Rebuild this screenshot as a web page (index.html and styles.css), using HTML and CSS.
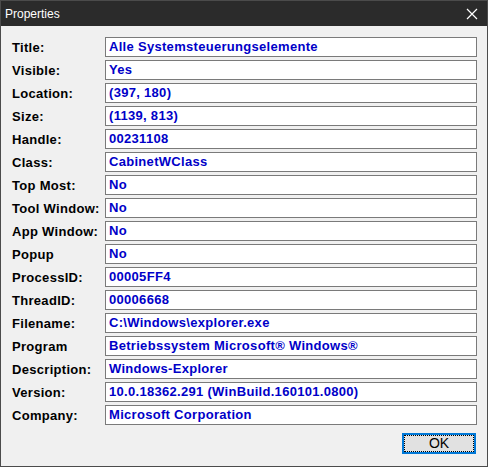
FILE: index.html
```html
<!DOCTYPE html>
<html lang="en">
<head>
    <meta charset="UTF-8">
    <title>Properties</title>
    <link rel="stylesheet" href="styles.css">
</head>
<body>

    <div class="window">
        <div class="titlebar">
            <span class="caption">Properties</span>
            <svg class="close" width="12" height="12" viewBox="0 0 12 12">
                <path d="M1 1 L11 11 M11 1 L1 11" stroke="#ffffff" stroke-width="1.2" fill="none"/>
            </svg>
        </div>

        <div class="content">
            <div class="props">
                <span class="label">Title:</span><div class="field">Alle Systemsteuerungselemente</div>
                <span class="label">Visible:</span><div class="field">Yes</div>
                <span class="label">Location:</span><div class="field">(397, 180)</div>
                <span class="label">Size:</span><div class="field">(1139, 813)</div>
                <span class="label">Handle:</span><div class="field">00231108</div>
                <span class="label">Class:</span><div class="field">CabinetWClass</div>
                <span class="label">Top Most:</span><div class="field">No</div>
                <span class="label">Tool Window:</span><div class="field">No</div>
                <span class="label">App Window:</span><div class="field">No</div>
                <span class="label">Popup</span><div class="field">No</div>
                <span class="label">ProcessID:</span><div class="field">00005FF4</div>
                <span class="label">ThreadID:</span><div class="field">00006668</div>
                <span class="label">Filename:</span><div class="field">C:\Windows\explorer.exe</div>
                <span class="label">Program</span><div class="field">Betriebssystem Microsoft® Windows®</div>
                <span class="label">Description:</span><div class="field">Windows-Explorer</div>
                <span class="label">Version:</span><div class="field">10.0.18362.291 (WinBuild.160101.0800)</div>
                <span class="label">Company:</span><div class="field">Microsoft Corporation</div>
            </div>

            <div class="buttons">
                <button class="btn"><span class="focus">OK</span></button>
            </div>
        </div>
    </div>

</body>
</html>
```

FILE: styles.css
```css
body {
    margin: 0;
    background-color: #f0f0f0;
    font-family: "Liberation Sans", Arial, sans-serif;
}

.window {
    width: 486px;
    height: 465px;
    border: 1px solid #4b4b4b;
    background-color: #f0f0f0;
    display: flex;
    flex-direction: column;
}

.titlebar {
    height: 25px;
    background-color: #2b2b2b;
    display: flex;
    align-items: center;
    justify-content: space-between;
    padding: 0 9px 0 4px;
}

.caption {
    color: #ffffff;
    font-family: "Liberation Sans", Arial, sans-serif;
    font-size: 12px;
}

.close {
    display: block;
}

.content {
    padding: 11px 10px 0 11px;
}

.props {
    display: grid;
    grid-template-columns: 93px 1fr;
    row-gap: 3px;
    align-items: center;
}

.label {
    font-size: 13px;
    font-weight: bold;
    letter-spacing: 0.3px;
    color: #000000;
}

.field {
    height: 18px;
    line-height: 18px;
    border: 1px solid #7a7a7a;
    background-color: #ffffff;
    padding-left: 3px;
    color: #0000c8;
    font-size: 13px;
    font-weight: bold;
    letter-spacing: 0.3px;
    white-space: nowrap;
}

.buttons {
    display: flex;
    justify-content: flex-end;
    padding-top: 8px;
    padding-right: 1px;
}

.btn {
    width: 74px;
    height: 21px;
    border: 2px solid #0078d7;
    background-color: #e1e1e1;
    padding: 0;
    margin: 0;
    font-family: "Liberation Sans", Arial, sans-serif;
    font-size: 14px;
    color: #000000;
}

.focus {
    display: block;
    height: 15px;
    line-height: 15px;
    border: 1px dotted #000000;
}
```
